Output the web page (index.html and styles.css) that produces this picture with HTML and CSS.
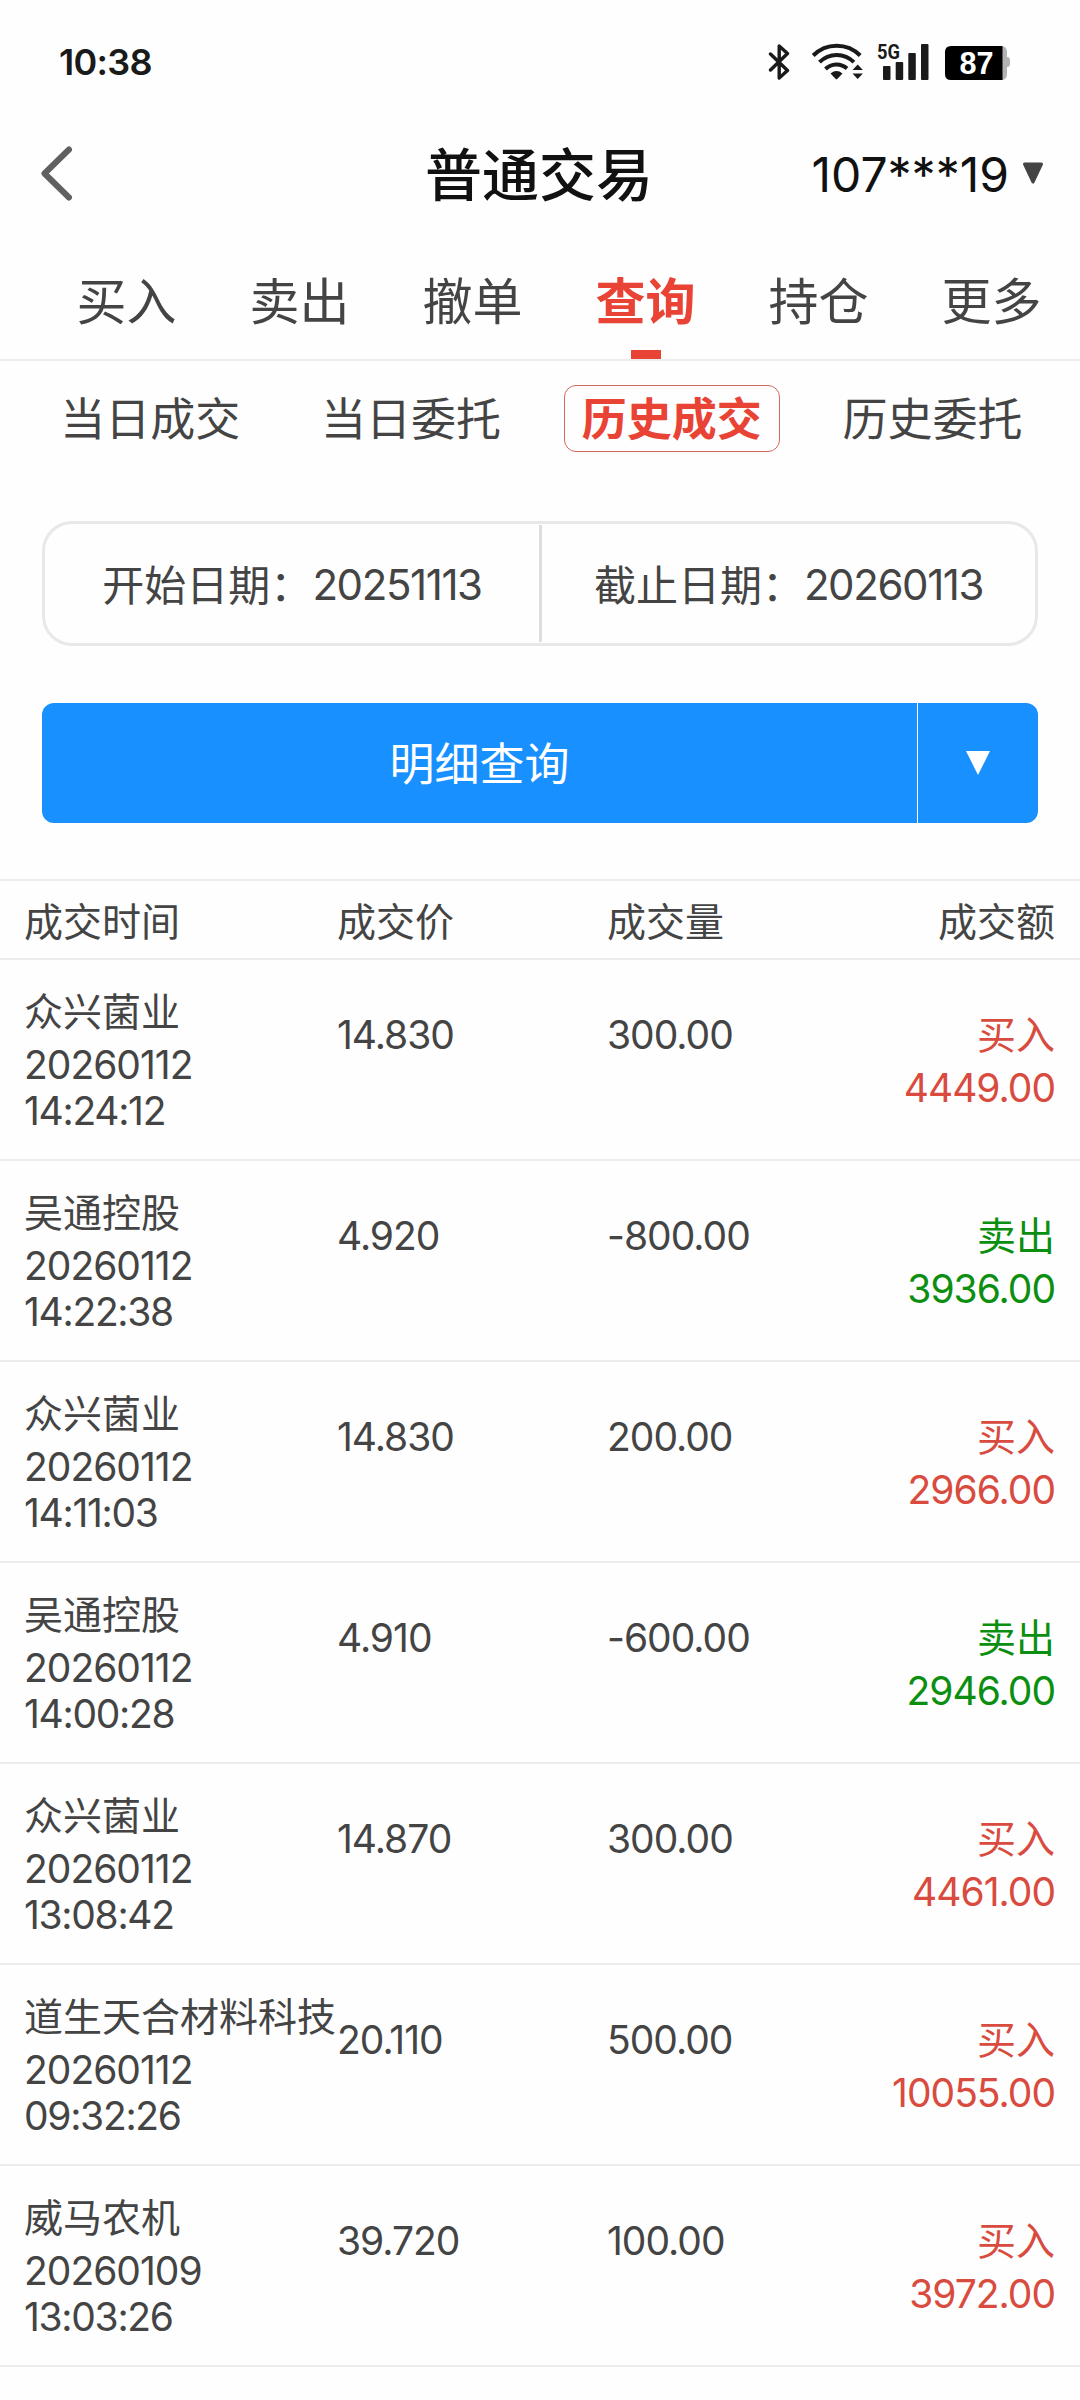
FILE: index.html
```html
<!DOCTYPE html>
<html lang="zh-CN">
<head>
<meta charset="utf-8">
<title>普通交易</title>
<link rel="stylesheet" href="styles.css">
</head>
<body>
<div class="status">
  <span class="clock">10:38</span>
  <svg class="status-icons" width="244" height="40" viewBox="0 0 244 40" aria-hidden="true">
    <path d="M2.500 14 19.500 30.500 11.200 38V6l8.300 7.500L2.500 30" fill="none" stroke="#1a1a1a" stroke-width="3.400" stroke-linejoin="round" stroke-linecap="round"/>
    <g fill="none" stroke="#1a1a1a" stroke-width="4">
      <path d="M45.2 15.5a33 33 0 0 1 47 0"/>
      <path d="M51.5 22.2a24 24 0 0 1 34.4 0"/>
      <path d="M57.5 29a15.5 15.5 0 0 1 21.5-.5"/>
    </g>
    <path d="M62.5 33.5q6-4.800 12 0l-5 5.300q-1 1-2 0z" fill="#1a1a1a"/>
    <path d="M84.500 30l5.200-5.500 5.200 5.500zM84.500 33.500l5.200 5.500 5.200-5.500z" fill="#1a1a1a"/>
    <text x="109" y="18.500" class="net" textLength="23" lengthAdjust="spacingAndGlyphs">5G</text>
    <g fill="#1a1a1a">
      <rect x="115" y="26" width="7.500" height="14" rx="1"/>
      <rect x="127.700" y="22" width="7.500" height="18" rx="1"/>
      <rect x="140.300" y="13" width="7.500" height="27" rx="1"/>
      <rect x="153" y="4" width="7.500" height="36" rx="1"/>
    </g>
    <path d="M230 6h3q6 0 6 6v5q3 0 3 3v4q0 3-3 3v7q0 6-6 6h-3z" fill="#b3b3b3"/>
    <path d="M183 6h51.500v34H183q-6 0-6-6V12q0-6 6-6z"/>
    <text x="191.500" y="34" class="level" textLength="34" lengthAdjust="spacingAndGlyphs">87</text>
  </svg>
</div>

<header class="header">
  <svg class="back" width="36" height="60" viewBox="0 0 36 60" aria-hidden="true"><path d="M31 6.500 6.500 30.500 31 54.500" fill="none" stroke="#606060" stroke-width="6" stroke-linecap="round" stroke-linejoin="round"/></svg>
  <h1 class="title">普通交易</h1>
  <div class="account"><span>107***19</span>
    <svg width="22" height="22" viewBox="0 0 22 22" aria-hidden="true"><path d="M2.500 2h17L11 20z" fill="#444" stroke="#444" stroke-width="3" stroke-linejoin="round"/></svg>
  </div>
</header>

<nav class="tabs">
  <a class="tab">买入</a><a class="tab">卖出</a><a class="tab">撤单</a><a class="tab tab-on">查询</a><a class="tab">持仓</a><a class="tab">更多</a>
</nav>

<nav class="subtabs">
  <a class="subtab"><span>当日成交</span></a>
  <a class="subtab"><span>当日委托</span></a>
  <a class="subtab subtab-on"><span>历史成交</span></a>
  <a class="subtab"><span>历史委托</span></a>
</nav>

<div class="dates">
  <div class="date"><span class="label">开始日期：</span><span class="num">20251113</span></div>
  <div class="date date-end"><span class="label">截止日期：</span><span class="num">20260113</span></div>
</div>

<div class="query">
  <button class="query-main">明细查询</button>
  <button class="query-more" aria-label="更多">
    <svg width="24" height="24" viewBox="0 0 24 24" aria-hidden="true"><path d="M0 0h24L12 24z" fill="#fff"/></svg>
  </button>
</div>

<section class="table">
  <div class="row head"><span>成交时间</span><span>成交价</span><span>成交量</span><span class="right">成交额</span></div>
  <div class="row item">
    <div class="stock"><p class="name">众兴菌业</p><p class="day">20260112</p><p class="time">14:24:12</p></div>
    <p class="value">14.830</p><p class="value">300.00</p>
    <div class="deal buy"><p>买入</p><p class="amount">4449.00</p></div>
  </div>
  <div class="row item">
    <div class="stock"><p class="name">吴通控股</p><p class="day">20260112</p><p class="time">14:22:38</p></div>
    <p class="value">4.920</p><p class="value">-800.00</p>
    <div class="deal sell"><p>卖出</p><p class="amount">3936.00</p></div>
  </div>
  <div class="row item">
    <div class="stock"><p class="name">众兴菌业</p><p class="day">20260112</p><p class="time">14:11:03</p></div>
    <p class="value">14.830</p><p class="value">200.00</p>
    <div class="deal buy"><p>买入</p><p class="amount">2966.00</p></div>
  </div>
  <div class="row item">
    <div class="stock"><p class="name">吴通控股</p><p class="day">20260112</p><p class="time">14:00:28</p></div>
    <p class="value">4.910</p><p class="value">-600.00</p>
    <div class="deal sell"><p>卖出</p><p class="amount">2946.00</p></div>
  </div>
  <div class="row item">
    <div class="stock"><p class="name">众兴菌业</p><p class="day">20260112</p><p class="time">13:08:42</p></div>
    <p class="value">14.870</p><p class="value">300.00</p>
    <div class="deal buy"><p>买入</p><p class="amount">4461.00</p></div>
  </div>
  <div class="row item">
    <div class="stock"><p class="name">道生天合材料科技</p><p class="day">20260112</p><p class="time">09:32:26</p></div>
    <p class="value">20.110</p><p class="value">500.00</p>
    <div class="deal buy"><p>买入</p><p class="amount">10055.00</p></div>
  </div>
  <div class="row item">
    <div class="stock"><p class="name">威马农机</p><p class="day">20260109</p><p class="time">13:03:26</p></div>
    <p class="value">39.720</p><p class="value">100.00</p>
    <div class="deal buy"><p>买入</p><p class="amount">3972.00</p></div>
  </div>
</section>
</body>
</html>
```
FILE: styles.css
```css
* { box-sizing: border-box; }

body {
  margin: 0;
  width: 1080px;
  height: 2400px;
  overflow: hidden;
  background: #fefefe;
  color: #444;
  font-family: Inter, "Noto Sans CJK SC", sans-serif;
  font-size: 39px;
}

p, h1 { margin: 0; }

.status {
  display: flex;
  justify-content: space-between;
  align-items: flex-start;
  height: 120px;
  padding: 40px 68px 0 59px;
}
.clock {
  color: #1a1a1a;
  font-size: 36px;
  font-weight: 600;
  letter-spacing: -0.7px;
  line-height: 44px;
}
.net { font: 700 21px Roboto, sans-serif; fill: #1a1a1a; }
.level { font: 700 32px "Liberation Sans", sans-serif; fill: #fff; }

.header {
  display: grid;
  grid-template-columns: 1fr 228px 1fr;
  align-items: center;
  height: 108px;
  padding: 0 36px 0 38px;
}
.back { margin-top: -2px; }
.title {
  margin-left: -2px;
  padding-top: 3px;
  color: #111;
  font-size: 57px;
  font-weight: 500;
  line-height: 64px;
}
.account {
  display: flex;
  justify-content: flex-end;
  align-items: center;
  gap: 13px;
  color: #111;
  font-size: 48px;
  line-height: 60px;
}
.account span { padding-top: 1px; }
.account svg { margin-top: -3px; }

.tabs {
  display: flex;
  height: 133px;
  padding: 0 2px 0 40px;
  border-bottom: 2px solid #ececec;
}
.tab {
  display: flex;
  flex: 1;
  flex-direction: column;
  align-items: center;
  justify-content: space-between;
  padding-top: 40px;
  font-size: 50px;
  line-height: 68px;
}
.tab-on { color: #e84335; font-weight: 700; }
.tab-on::after {
  content: "";
  width: 30px;
  height: 9px;
  background: #e84335;
}

.subtabs {
  display: flex;
  height: 160px;
  padding: 24px 17px 0 20px;
}
.subtab {
  display: flex;
  flex: 1;
  justify-content: center;
  font-size: 45px;
}
.subtab span {
  height: 67px;
  padding: 0 17px;
  border: 1px solid transparent;
  border-radius: 12px;
  line-height: 68px;
}
.subtab-on { color: #e84335; font-weight: 700; }
.subtab-on span { border-color: #d2685f; }

.dates {
  display: grid;
  grid-template-columns: 494px 1fr;
  height: 125px;
  margin: 0 42px;
  padding: 1px 0;
  border: 3px solid #e8e8e8;
  border-radius: 30px;
}
.date {
  display: flex;
  align-items: center;
  justify-content: center;
  font-size: 42px;
}
.date-end { border-left: 3px solid #ddd; }
.label { padding-bottom: 2px; }
.date .num { padding-top: 2px; letter-spacing: -1.4px; }

.query {
  display: flex;
  height: 120px;
  margin: 57px 42px 56px;
  border-radius: 12px;
  background: #1890ff;
}
.query button {
  border: 0;
  background: none;
  color: #fff;
  font: inherit;
  font-size: 45px;
}
.query .query-main { flex: 1; padding: 0 6px 3px; }
.query .query-more {
  display: flex;
  align-items: center;
  justify-content: center;
  width: 121px;
  border-left: 1px solid #fff;
}

.table { border-top: 2px solid #ececec; }
.row {
  display: grid;
  grid-template-columns: 313px 270px 1fr 200px;
  padding: 0 25px 0 24px;
  border-bottom: 2px solid #ececec;
  white-space: nowrap;
}
.head { height: 79px; line-height: 82px; }
.right { text-align: right; }
.item { height: 201px; }
.stock { padding-top: 23px; }
.name { line-height: 58px; }
.day { line-height: 48px; }
.time { line-height: 44px; }
.value { padding-top: 49px; line-height: 52px; }
.deal { padding-top: 48px; line-height: 53px; text-align: right; }
.buy { color: #d84b3e; }
.sell { color: #0c8f10; }
.day, .value, .amount { letter-spacing: -1px; }
.time { letter-spacing: -1.3px; }
```
